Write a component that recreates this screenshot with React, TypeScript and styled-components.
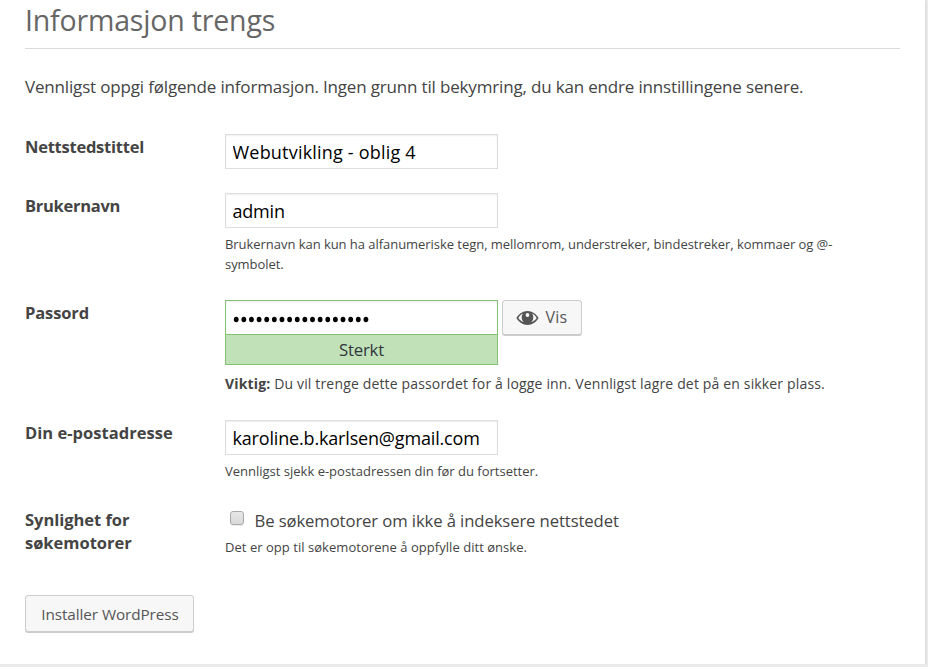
import React from "react";
import styled, { createGlobalStyle } from "styled-components";

const GlobalStyle = createGlobalStyle`
  *, *::before, *::after { box-sizing: border-box; }
  body {
    margin: 0;
    background: #ebebeb;
    color: #444;
    font-family: "Open Sans", "Noto Sans", sans-serif;
    overflow: hidden;
  }
`;

const Card = styled.main`
  width: 925px;
  height: 664px;
  padding: 0 25px;
  background: #fff;
  box-shadow: 0 1px 3px rgba(0, 0, 0, 0.16);
`;

const Title = styled.h1`
  margin: 0;
  height: 49px;
  padding-top: 1px;
  border-bottom: 1px solid #dadada;
  color: #666;
  font-size: 28.5px;
  font-weight: 400;
  line-height: 39px;
  letter-spacing: -0.17px;
`;

const Intro = styled.p`
  margin: 25px 0 34px;
  font-size: 17px;
  line-height: 26px;
  letter-spacing: -0.17px;
  white-space: nowrap;
`;

const Form = styled.form`
  display: flex;
  flex-direction: column;
  align-items: flex-start;
`;

const Row = styled.div<{ $height: number }>`
  display: grid;
  grid-template-columns: 200px 640px;
  height: ${(p) => p.$height}px;
`;

const Label = styled.label<{ $spacing: number }>`
  padding-top: 1px;
  font-size: 16.5px;
  font-weight: 700;
  line-height: 23px;
  letter-spacing: ${(p) => p.$spacing}px;
  white-space: pre-line;
`;

const Field = styled.div`
  display: flex;
  flex-direction: column;
  align-items: flex-start;
`;

const Input = styled.input<{ $spacing?: number; $strong?: boolean }>`
  display: block;
  width: 273px;
  height: 35px;
  margin: 0;
  padding: 1px 6.5px 0;
  border: 1px solid ${(p) => (p.$strong ? "#83c373" : "#ddd")};
  border-radius: 0;
  outline: 0;
  background: #fff;
  box-shadow: inset 0 1px 2px rgba(0, 0, 0, 0.07);
  color: #000;
  font-family: inherit;
  font-size: 18px;
  letter-spacing: ${(p) => p.$spacing ?? 0}px;
`;

const PasswordLine = styled.div`
  display: flex;
  gap: 4px;
`;

const PasswordBox = styled.div`
  position: relative;
  display: flex;
`;

const Dots = styled.svg`
  position: absolute;
  left: 8px;
  top: 15px;
`;

const Strength = styled.div`
  width: 273px;
  height: 31px;
  margin-top: -1px;
  border: 1px solid #83c373;
  background: #c1e1b9;
  color: #32373c;
  font-size: 16.8px;
  line-height: 29px;
  letter-spacing: -0.2px;
  text-align: center;
`;

const Button = styled.button<{ $install?: boolean }>`
  display: flex;
  align-items: center;
  justify-content: center;
  gap: 6px;
  width: ${(p) => (p.$install ? 169 : 80)}px;
  height: ${(p) => (p.$install ? 37 : 35)}px;
  padding: ${(p) => (p.$install ? "1px 0 0 1px" : "0")};
  border: 1px solid #ccc;
  border-radius: 3px;
  background: #f7f7f7;
  box-shadow: 0 1px 0 #ccc;
  color: #555;
  font-family: inherit;
  font-size: ${(p) => (p.$install ? 15.3 : 16)}px;
  line-height: 22px;
  letter-spacing: ${(p) => (p.$install ? -0.08 : 0.3)}px;
`;

const ButtonText = styled.span`
  padding-bottom: 1px;
`;

const Description = styled.p<{ $top?: number; $large?: boolean; $spacing?: number }>`
  margin: ${(p) => p.$top ?? 6}px 0 0;
  font-size: ${(p) => (p.$large ? 14 : 13)}px;
  line-height: 20px;
  letter-spacing: ${(p) => p.$spacing ?? 0}px;
  white-space: pre-line;
`;

const CheckLine = styled.label`
  display: flex;
  height: 27px;
  font-size: 16.7px;
  line-height: 27px;
  letter-spacing: -0.11px;
  padding-left: 5px;
`;

const Checkbox = styled.input`
  appearance: none;
  width: 14px;
  height: 14px;
  margin: 4px 10.5px 0 0;
  border: 1px solid #a9a9a9;
  border-radius: 3px;
  background: linear-gradient(#e8e8e8, #d8d8d8);
  box-shadow: 0 1px 1px rgba(0, 0, 0, 0.08);
`;

const DOTS = Array.from({ length: 18 }, (_, i) => i);

const EyeIcon = () => (
  <svg width="23" height="16" viewBox="0 0 23 16" aria-hidden="true">
    <path
      fill="#555"
      fillRule="evenodd"
      d="M11.5 1C6.7 1 2.8 3.9.4 8c2.4 4.1 6.3 7 11.1 7s8.7-2.9 11.1-7C20.2 3.900 16.300 1 11.500 1ZM2.300 8c1.200-2.100 2.800-3.700 4.700-4.600A6 6 0 0 0 5.700 7.200a6 6 0 0 0 2 4.900C5.500 11.400 3.700 10 2.300 8ZM15.300 12.100a6 6 0 0 0 2-4.900A6 6 0 0 0 16 3.400c1.900.9 3.500 2.500 4.700 4.600-1.400 2-3.200 3.400-5.400 4.100ZM11.500 3.100a1.900 1.900 0 1 1 0 3.800 1.900 1.900 0 0 1 0-3.800Z"
    />
  </svg>
);

export default function App() {
  return (
    <>
      <GlobalStyle />
      <Card>
        <Title>Informasjon trengs</Title>
        <Intro>
          Vennligst oppgi følgende informasjon. Ingen grunn til bekymring, du kan endre innstillingene senere.
        </Intro>
        <Form>
          <Row $height={59}>
            <Label htmlFor="title" $spacing={-0.24}>Nettstedstittel</Label>
            <Field>
              <Input id="title" defaultValue="Webutvikling - oblig 4" $spacing={0.2} />
            </Field>
          </Row>
          <Row $height={107}>
            <Label htmlFor="user" $spacing={-0.29}>Brukernavn</Label>
            <Field>
              <Input id="user" defaultValue="admin" $spacing={-0.2} />
              <Description $spacing={-0.045}>
                {"Brukernavn kan kun ha alfanumeriske tegn, mellomrom, understreker, bindestreker, kommaer og @-\nsymbolet."}
              </Description>
            </Field>
          </Row>
          <Row $height={120}>
            <Label htmlFor="pass" $spacing={-0.12}>Passord</Label>
            <Field>
              <PasswordLine>
                <PasswordBox>
                  <Input id="pass" $strong />
                  <Dots width="140" height="9" aria-hidden="true">
                    {DOTS.map((i) => (
                      <ellipse key={i} cx={3.2 + i * 7.63} cy="4.5" rx="2.4" ry="2.8" />
                    ))}
                  </Dots>
                </PasswordBox>
                <Button type="button">
                  <EyeIcon />
                  <ButtonText>Vis</ButtonText>
                </Button>
              </PasswordLine>
              <Strength>Sterkt</Strength>
              <Description $top={9} $large $spacing={0.155}>
                <strong>Viktig:</strong> Du vil trenge dette passordet for å logge inn. Vennligst lagre det på en sikker plass.
              </Description>
            </Field>
          </Row>
          <Row $height={87}>
            <Label htmlFor="mail" $spacing={0.03}>Din e-postadresse</Label>
            <Field>
              <Input id="mail" defaultValue="karoline.b.karlsen@gmail.com" $spacing={-0.17} />
              <Description>Vennligst sjekk e-postadressen din før du fortsetter.</Description>
            </Field>
          </Row>
          <Row $height={88}>
            <Label htmlFor="robots" $spacing={-0.03}>{"Synlighet for\nsøkemotorer"}</Label>
            <Field>
              <CheckLine>
                <Checkbox id="robots" type="checkbox" />
                Be søkemotorer om ikke å indeksere nettstedet
              </CheckLine>
              <Description $top={3} $spacing={0.04}>Det er opp til søkemotorene å oppfylle ditt ønske.</Description>
            </Field>
          </Row>
          <Button type="button" $install>Installer WordPress</Button>
        </Form>
      </Card>
    </>
  );
}
